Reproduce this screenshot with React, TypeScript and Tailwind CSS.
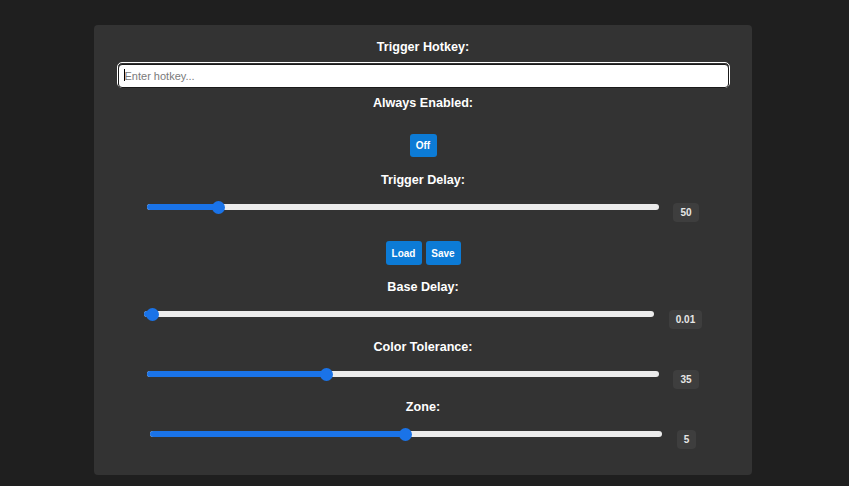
const font = { fontFamily: '"Liberation Sans", Arial, sans-serif' }

function Label({ text, className = '' }: { text: string; className?: string }) {
  return <div className={`h-4 leading-4 text-[12.6px] font-bold text-white text-center ${className}`}>{text}</div>
}

function Slider({ width, pos, value, gap, className = '' }: { width: number; pos: number; value: string; gap: number; className?: string }) {
  return (
    <div className={`flex items-start justify-center ${className}`} style={{ gap }}>
      <div className="relative h-4" style={{ width }}>
        <div className="absolute left-0 right-0 top-[5px] h-[6px] rounded-full bg-[#ececec]" />
        <div className="absolute left-0 top-[5px] h-[6px] rounded-full bg-[#1a73e8]" style={{ width: pos }} />
        <div className="absolute top-[1.5px] w-[13px] h-[13px] rounded-full bg-[#1a73e8]" style={{ left: pos - 6.5 }} />
      </div>
      <div className="mt-[4px] h-[19px] px-[7px] rounded-[4px] bg-[#3e3e3e] text-[10px] font-bold leading-[19px] text-[#e6e6e6]">{value}</div>
    </div>
  )
}

function Btn({ text, w }: { text: string; w: number }) {
  return (
    <button className="h-[24px] rounded-[3px] bg-[#0c7bd6] text-[10px] font-bold text-white" style={{ width: w }}>
      {text}
    </button>
  )
}

export default function App() {
  return (
    <div className="min-h-[486px] w-full bg-[#1f1f1f] pt-[25px]" style={font}>
      <div className="ml-[94px] w-[658px] h-[450px] rounded-[4px] bg-[#333333] pt-[14px] flex flex-col items-center">
        <Label text="Trigger Hotkey:" />
        <div className="relative mt-[7px] w-[613px] h-[26px] rounded-[5px] border border-white">
          <input
            placeholder="Enter hotkey..."
            className="w-full h-full rounded-[4px] border border-[#1a1a1a] bg-white pl-[6px] text-[11px] text-black placeholder:text-[#7a7a7a] outline-none"
          />
          <span className="absolute left-[6px] top-[6px] w-px h-[12px] bg-black" />
        </div>
        <Label text="Always Enabled:" className="mt-[7px]" />
        <div className="mt-[21px]">
          <button className="h-[23px] w-[27px] rounded-[3px] bg-[#0c7bd6] text-[10px] font-bold text-white">Off</button>
        </div>
        <Label text="Trigger Delay:" className="mt-[15px]" />
        <Slider width={512} pos={71} value="50" gap={14} className="mt-[11px]" />
        <div className="mt-[19px] flex gap-[4px]">
          <Btn text="Load" w={36} />
          <Btn text="Save" w={35} />
        </div>
        <Label text="Base Delay:" className="mt-[14px]" />
        <Slider width={510} pos={9} value="0.01" gap={15} className="mt-[11px]" />
        <Label text="Color Tolerance:" className="mt-[10px]" />
        <Slider width={512} pos={179} value="35" gap={14} className="mt-[11px]" />
        <Label text="Zone:" className="mt-[10px]" />
        <Slider width={512} pos={256} value="5" gap={15} className="mt-[11px]" />
      </div>
    </div>
  )
}
